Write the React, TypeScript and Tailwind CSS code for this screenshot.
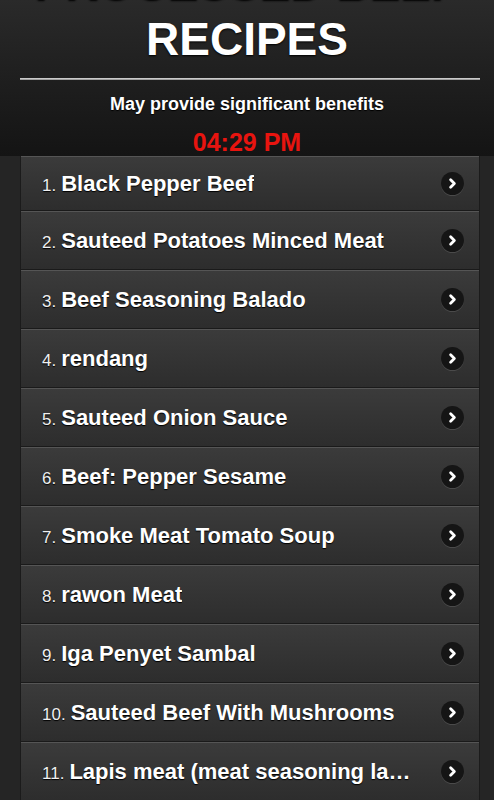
import { ChevronRight } from "lucide-react";

const recipes = [
  "Black Pepper Beef",
  "Sauteed Potatoes Minced Meat",
  "Beef Seasoning Balado",
  "rendang",
  "Sauteed Onion Sauce",
  "Beef: Pepper Sesame",
  "Smoke Meat Tomato Soup",
  "rawon Meat",
  "Iga Penyet Sambal",
  "Sauteed Beef With Mushrooms",
  "Lapis meat (meat seasoning layer)",
];

export default function App() {
  return (
    <div className="h-[800px] w-[494px] overflow-hidden bg-[#252525] font-['Liberation_Sans',Arial,sans-serif]">
      {/* header */}
      <header className="h-[156px] overflow-hidden bg-gradient-to-b from-[#2a2a2a] to-[#141414] text-center">
        <h1 className="-mt-[43px] text-[46px] leading-[55px] font-bold text-white [text-shadow:0_1px_2px_#000]">
          PROCESSED BEEF
          <br />
          RECIPES
        </h1>
        <div className="ml-[20px] mr-[14px] mt-[11px] h-[2px] bg-gradient-to-b from-[#e0e0e0] to-[#8a8a8a]" />
        <p className="mt-[13px] text-[18px] leading-[22px] font-bold text-white [text-shadow:0_1px_1px_#000]">
          May provide significant benefits
        </p>
        <p className="mt-[15px] text-[25px] leading-none font-bold text-[#e8140f]">04:29 PM</p>
      </header>

      {/* list */}
      <ul className="ml-[20px] mr-[14px] border-x border-[#1b1b1b]">
        {recipes.map((name, i) => (
          <li
            key={name}
            className={`flex items-center border-b border-[#1a1a1a] bg-gradient-to-b from-[#3b3b3b] to-[#2d2d2d] pl-[21px] pr-[15px] shadow-[inset_0_1px_0_#555] ${
              i === 0 ? "h-[55px]" : "h-[59px]"
            }`}
          >
            <div className="flex min-w-0 flex-1 items-baseline text-white [text-shadow:0_1px_1px_#000]">
              <span className="shrink-0 text-[17px] text-[#f0f0f0]">{i + 1}.</span>
              <span className="ml-[5px] min-w-0 truncate text-[22px] font-bold">{name}</span>
            </div>
            <span className="ml-[24px] flex h-[23px] w-[23px] shrink-0 items-center justify-center rounded-full bg-[#151515] shadow-[0_1px_0_#4a4a4a]">
              <ChevronRight className="h-[15px] w-[15px] text-white" strokeWidth={4.5} />
            </span>
          </li>
        ))}
      </ul>
    </div>
  );
}
